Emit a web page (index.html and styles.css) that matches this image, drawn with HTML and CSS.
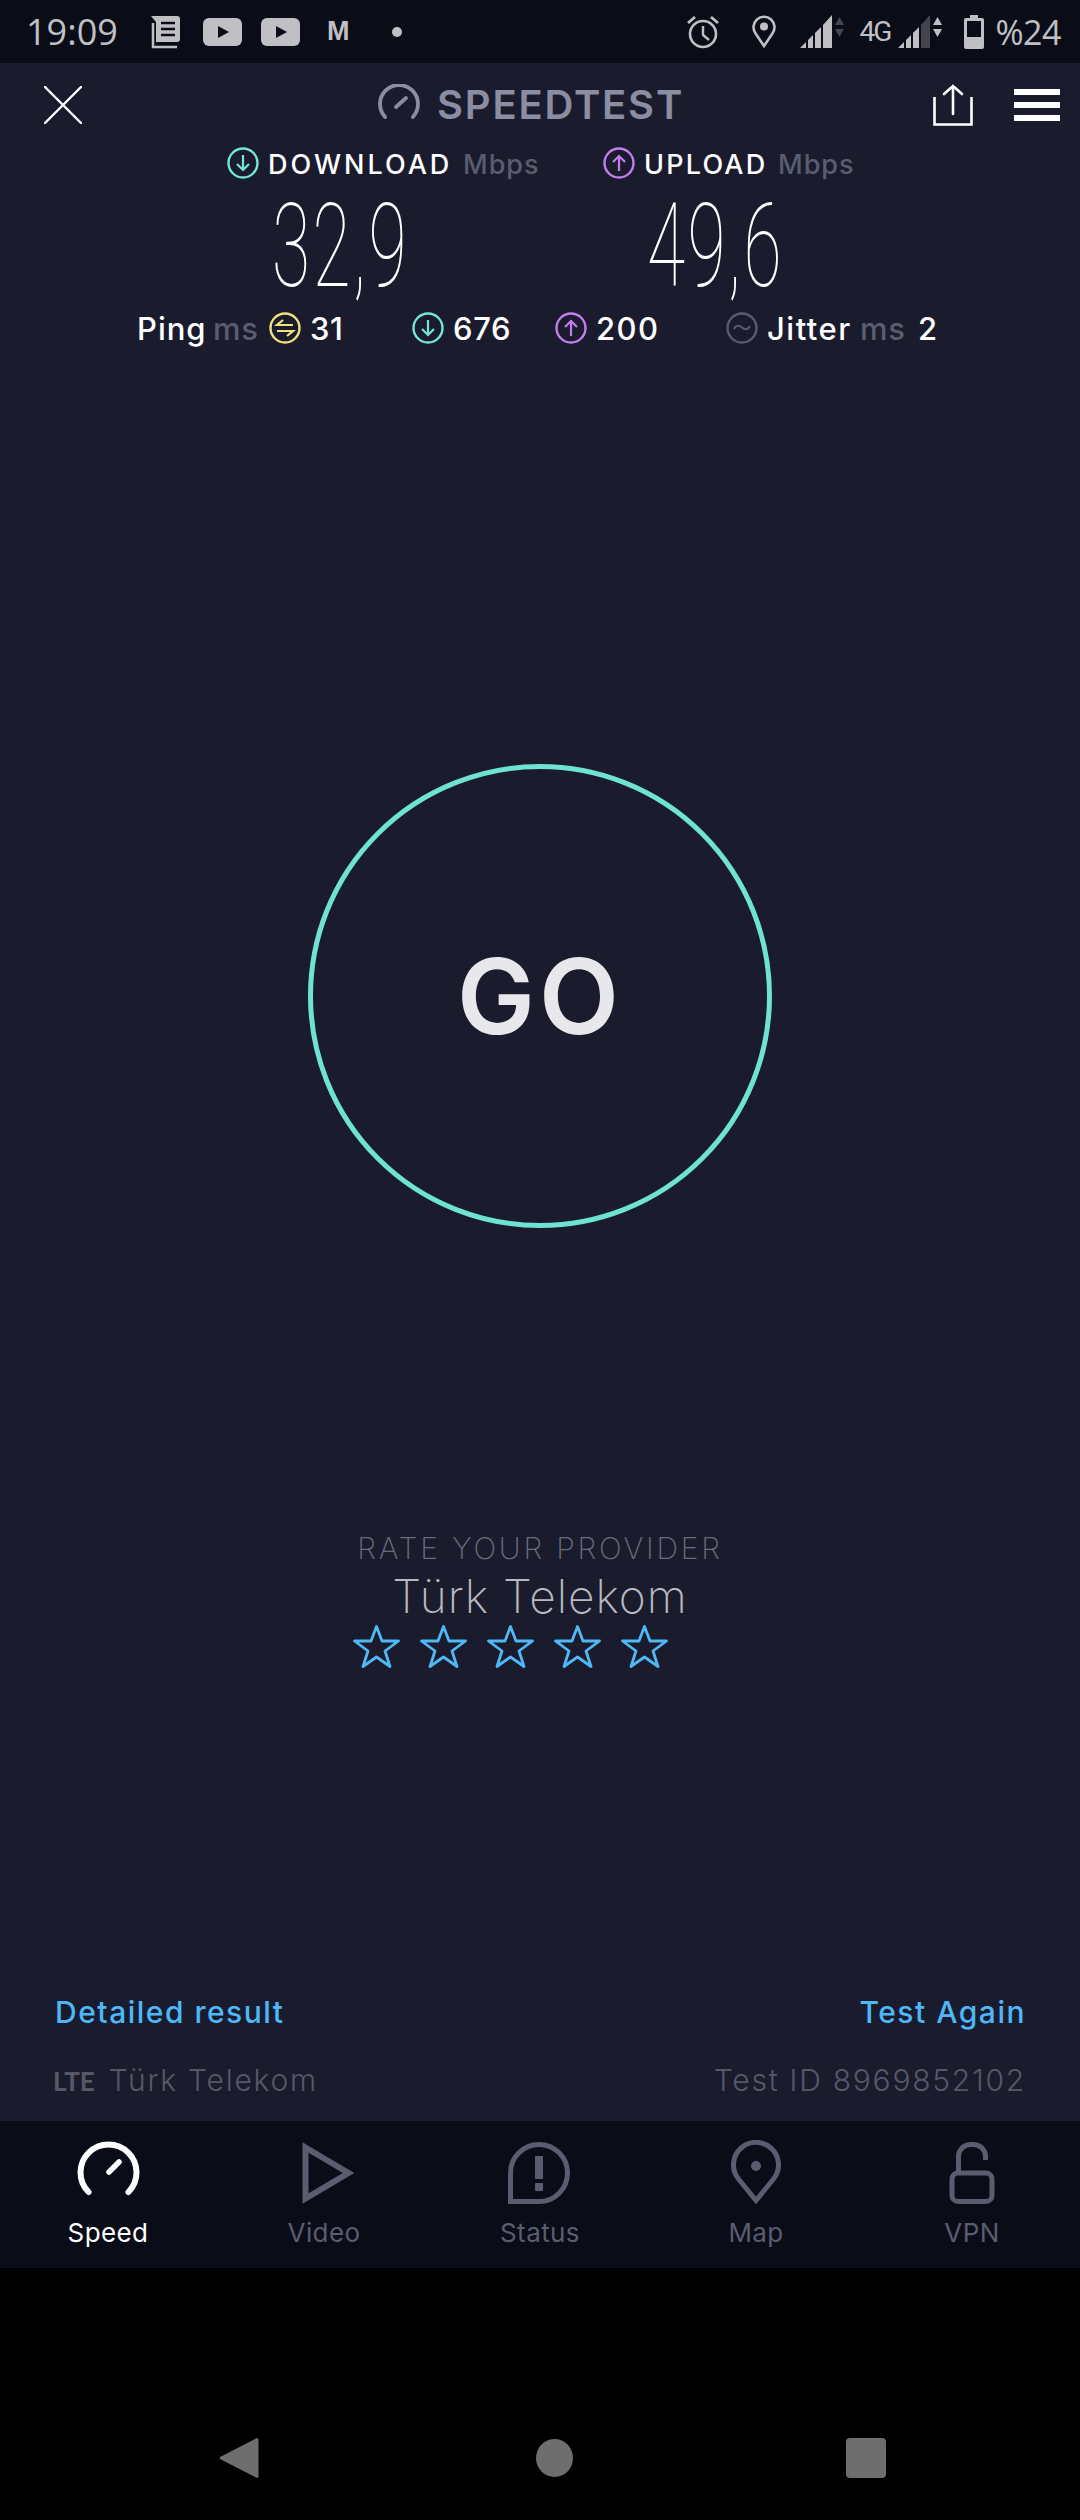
FILE: index.html
```html
<!DOCTYPE html>
<html lang="en">
<head>
<meta charset="utf-8">
<title>Speedtest</title>
<link rel="stylesheet" href="styles.css">
</head>
<body>
<div class="app">
  <div class="status">
    <span class="clock">19:09</span>
    <svg class="si news" width="34" height="34" viewBox="0 0 34 34"><path d="M5 8v24h24" fill="none" stroke="#c0c0c4" stroke-width="2.5"/><path d="M3 1h26a3 3 0 0 1 3 3v20a3 3 0 0 1-3 3H8V7z" fill="#c0c0c4"/><path d="M13 8h14M13 14h14M13 20h14" stroke="#0a0c18" stroke-width="2.6"/></svg>
    <svg class="si yt1" width="39" height="28" viewBox="0 0 39 28"><rect width="39" height="28" rx="6" fill="#c0c0c4"/><path d="M15 8l11 6-11 6z" fill="#0a0c18"/></svg>
    <svg class="si yt2" width="39" height="28" viewBox="0 0 39 28"><rect width="39" height="28" rx="6" fill="#c0c0c4"/><path d="M15 8l11 6-11 6z" fill="#0a0c18"/></svg>
    <span class="mail">M</span>
    <span class="dot"></span>
    <span class="spacer"></span>
    <svg class="si" width="32" height="34" viewBox="0 0 32 34"><circle cx="16" cy="19" r="13" fill="none" stroke="#c0c0c4" stroke-width="2.6"/><path d="M16 11v9l6 5" fill="none" stroke="#c0c0c4" stroke-width="2.4"/><path d="M1 8l7-6M31 8l-7-6" stroke="#c0c0c4" stroke-width="2.8"/></svg>
    <svg class="si pin" width="24" height="33" viewBox="0 0 24 33"><path d="M12 31L3.6 18.5A10.5 10.5 0 1 1 20.4 18.5z" fill="none" stroke="#c0c0c4" stroke-width="2.6"/><circle cx="12" cy="11.5" r="4" fill="#c0c0c4"/></svg>
    <svg class="si sig" width="45" height="33" viewBox="0 0 45 33"><path d="M0 33L6 27V33zM8 25L13 20V33H8zM15 18L21 12V33H15zM23 10L32 0V33H23z" fill="#c0c0c4"/><path d="M35 10l4.500-8 4.500 8zM35 14h9l-4.500 8z" fill="#44454f"/></svg>
    <span class="net">4G</span>
    <svg class="si sig2" width="45" height="33" viewBox="0 0 45 33"><path d="M0 33L6 27V33zM8 25L13 20V33H8zM15 18L21 12V33H15z" fill="#c0c0c4"/><path d="M23 10L32 0V33H23z" fill="#44454f"/><path d="M35 10l4.500-8 4.500 8zM35 14h9l-4.500 8z" fill="#c0c0c4"/></svg>
    <svg class="si bat" width="20" height="34" viewBox="0 0 20 34"><path d="M6 0h8v3h4a2 2 0 0 1 2 2v27a2 2 0 0 1-2 2H2a2 2 0 0 1-2-2V5a2 2 0 0 1 2-2h4z" fill="#c0c0c4"/><rect x="3" y="6" width="14" height="16" fill="#0a0c18"/></svg>
    <span class="pct">%24</span>
  </div>

  <main class="screen">
    <div class="toolbar">
      <svg class="close" width="38" height="38" viewBox="0 0 38 38"><path d="M1 1l36 36M37 1L1 37" stroke="#fff" stroke-width="2.4" stroke-linecap="round"/></svg>
      <div class="brand">
        <svg class="gauge" width="42" height="36" viewBox="0 0 42 36"><path d="M7.100 33A19 19 0 1 1 34.900 33" fill="none" stroke="#8b8da3" stroke-width="3.8" stroke-linecap="round"/><path d="M18 23l10-9" stroke="#8b8da3" stroke-width="3.800" stroke-linecap="round"/></svg>
        <span>SPEEDTEST</span>
      </div>
      <svg class="share" width="40" height="42" viewBox="0 0 40 42"><path d="M1.500 13V40.500H38.500V13" fill="none" stroke="#fff" stroke-width="2.600"/><path d="M20 30V2M11 10l9-8 9 8" fill="none" stroke="#fff" stroke-width="2.600" stroke-linecap="round"/></svg>
      <div class="burger"><i></i><i></i><i></i></div>
    </div>

    <div class="legend">
      <div class="leg leg-down">
        <svg class="ring" viewBox="0 0 32 32"><circle cx="16" cy="16" r="14.500" fill="none" stroke="#73e6d9" stroke-width="2.400"/><path d="M16 8v15M10 17l6 6 6-6" fill="none" stroke="#73e6d9" stroke-width="2.200"/></svg>
        <span class="w lab-down">DOWNLOAD</span><span class="g">Mbps</span>
      </div>
      <div class="leg leg-up">
        <svg class="ring" viewBox="0 0 32 32"><circle cx="16" cy="16" r="14.500" fill="none" stroke="#c57cf0" stroke-width="2.400"/><path d="M16 24V9M10 15l6-6 6 6" fill="none" stroke="#c57cf0" stroke-width="2.200"/></svg>
        <span class="w lab-up">UPLOAD</span><span class="g">Mbps</span>
      </div>
    </div>

    <div class="numbers">
      <span class="num num-down">32,9</span>
      <span class="num num-up">49,6</span>
    </div>

    <div class="metrics">
      <span class="w ping">Ping</span><span class="g ms">ms</span>
      <svg class="ring m-ping" viewBox="0 0 32 32"><circle cx="16" cy="16" r="14.500" fill="none" stroke="#f4e07e" stroke-width="2.400"/><path d="M24 13H8l6-5M8 19h16l-6 5" fill="none" stroke="#f4e07e" stroke-width="2.200"/></svg>
      <span class="w v31">31</span>
      <svg class="ring m-down" viewBox="0 0 32 32"><circle cx="16" cy="16" r="14.500" fill="none" stroke="#73e6d9" stroke-width="2.400"/><path d="M16 8v15M10 17l6 6 6-6" fill="none" stroke="#73e6d9" stroke-width="2.200"/></svg>
      <span class="w v676">676</span>
      <svg class="ring m-up" viewBox="0 0 32 32"><circle cx="16" cy="16" r="14.500" fill="none" stroke="#c57cf0" stroke-width="2.400"/><path d="M16 24V9M10 15l6-6 6 6" fill="none" stroke="#c57cf0" stroke-width="2.200"/></svg>
      <span class="w v200">200</span>
      <svg class="ring m-jit" viewBox="0 0 32 32"><circle cx="16" cy="16" r="14.500" fill="none" stroke="#5a5c6e" stroke-width="2.400"/><path d="M8 17c2-4 5-4 8-1.500s6 2.500 8-1.500" fill="none" stroke="#5a5c6e" stroke-width="2"/></svg>
      <span class="w jit">Jitter</span><span class="g ms2">ms</span><span class="w v2">2</span>
    </div>

    <div class="go"><span>GO</span></div>

    <div class="rate">
      <div class="rate-title">RATE YOUR PROVIDER</div>
      <div class="rate-name">Türk Telekom</div>
      <div class="stars">
        <svg width="47" height="43" viewBox="0 0 47 43"><path d="M23.500 1.500L29 16H45.500L32 26l5 15.500L23.500 32 10 41.500 15 26 1.500 16H18z" fill="none" stroke="#4fb8f5" stroke-width="2.800" stroke-linejoin="round"/></svg>
        <svg width="47" height="43" viewBox="0 0 47 43"><path d="M23.500 1.500L29 16H45.500L32 26l5 15.500L23.500 32 10 41.500 15 26 1.500 16H18z" fill="none" stroke="#4fb8f5" stroke-width="2.800" stroke-linejoin="round"/></svg>
        <svg width="47" height="43" viewBox="0 0 47 43"><path d="M23.500 1.500L29 16H45.500L32 26l5 15.500L23.500 32 10 41.500 15 26 1.500 16H18z" fill="none" stroke="#4fb8f5" stroke-width="2.800" stroke-linejoin="round"/></svg>
        <svg width="47" height="43" viewBox="0 0 47 43"><path d="M23.500 1.500L29 16H45.500L32 26l5 15.500L23.500 32 10 41.500 15 26 1.500 16H18z" fill="none" stroke="#4fb8f5" stroke-width="2.800" stroke-linejoin="round"/></svg>
        <svg width="47" height="43" viewBox="0 0 47 43"><path d="M23.500 1.500L29 16H45.500L32 26l5 15.500L23.500 32 10 41.500 15 26 1.500 16H18z" fill="none" stroke="#4fb8f5" stroke-width="2.800" stroke-linejoin="round"/></svg>
      </div>
    </div>

    <div class="foot">
      <div class="foot-row links"><span>Detailed result</span><span>Test Again</span></div>
      <div class="foot-row info"><span class="prov"><b>LTE</b>Türk Telekom</span><span>Test ID 8969852102</span></div>
    </div>
  </main>

  <nav class="tabs">
    <div class="tab on">
      <svg width="63" height="64" viewBox="0 0 63 64"><path d="M11.500 52A28 28 0 1 1 51.500 52" fill="none" stroke="#fff" stroke-width="6" stroke-linecap="round"/><path d="M32 32l10-10" stroke="#fff" stroke-width="5.500" stroke-linecap="round"/></svg>
      <span>Speed</span>
    </div>
    <div class="tab">
      <svg class="play" width="54" height="64" viewBox="0 -2 54 64"><path d="M3.500 5.500V56.500L46.500 31z" fill="none" stroke="#5a5c70" stroke-width="6"/></svg>
      <span>Video</span>
    </div>
    <div class="tab">
      <svg width="64" height="64" viewBox="0 -2 64 64"><path d="M2.500 59.500V31A28.500 28.500 0 1 1 31 59.500z" fill="none" stroke="#5a5c70" stroke-width="5"/><rect x="27" y="14" width="8" height="23" rx="1" fill="#5a5c70"/><rect x="27" y="41" width="8" height="8" rx="1" fill="#5a5c70"/></svg>
      <span>Status</span>
    </div>
    <div class="tab">
      <svg width="50" height="64" viewBox="0 -2 50 64"><path d="M25 58.500L7.500 37A22.500 22.500 0 1 1 42.500 37z" fill="none" stroke="#5a5c70" stroke-width="5"/><circle cx="25" cy="24" r="5" fill="#5a5c70"/></svg>
      <span>Map</span>
    </div>
    <div class="tab">
      <svg width="46" height="64" viewBox="0 -2 46 64"><rect x="3" y="31" width="40" height="28.500" rx="6" fill="none" stroke="#5a5c70" stroke-width="5"/><path d="M9.500 31V14.500A12 12 0 0 1 21.500 2.500h3A12 12 0 0 1 36.500 14.500V18" fill="none" stroke="#5a5c70" stroke-width="5"/></svg>
      <span>VPN</span>
    </div>
  </nav>

  <div class="sysnav">
    <svg width="39" height="42" viewBox="0 0 39 42"><path d="M36 1.500a1.500 1.500 0 0 1 2.500 1.200V39.300a1.500 1.500 0 0 1-2.500 1.200L1 22.500a1.500 1.500 0 0 1 0-3z" fill="#6e6e6e"/></svg>
    <span class="home"></span>
    <span class="square"></span>
  </div>
</div>
</body>
</html>
```
FILE: styles.css
```css
* { box-sizing: border-box; }
html, body { margin: 0; padding: 0; background: #000; }
.app { width: 1080px; height: 2520px; display: flex; flex-direction: column; font-family: "Inter", "Liberation Sans", sans-serif; overflow: hidden; }

.status { height: 63px; background: #0a0c18; display: flex; align-items: center; padding: 0 19px 0 26px; color: #c0c0c4; flex: none; }
.clock { font: 400 36px/1 "Open Sans", sans-serif; width: 91px; white-space: nowrap; }
.si { flex: none; display: block; }
.news { margin-left: 31px; }
.yt1 { margin-left: 21px; }
.yt2 { margin-left: 19px; }
.mail { font: 700 27px/1 "Liberation Sans", sans-serif; margin-left: 27px; width: 25px; }
.dot { width: 10px; height: 10px; border-radius: 50%; background: #c0c0c4; margin-left: 40px; }
.spacer { flex: 1; }
.pin { margin-left: 33px; }
.sig { margin-left: 24px; }
.net { font: 400 28px/1 "Roboto", sans-serif; margin-left: 15px; letter-spacing: -2px; width: 32px; }
.sig2 { margin-left: 6px; }
.bat { margin-left: 21px; }
.pct { font: 400 34px/1 "Open Sans", sans-serif; margin-left: 12px; letter-spacing: -.5px; }

.screen { height: 2058px; background: #1a1c2e; display: flex; flex-direction: column; flex: none; }
.toolbar { height: 84px; display: flex; align-items: center; padding: 0 19px 1px 44px; flex: none; }
.brand { display: flex; align-items: center; gap: 17px; margin-left: 296px; width: 308px; color: #8b8da3; font-size: 40px; font-weight: 600; letter-spacing: 1.8px; white-space: nowrap; }
.gauge { margin-top: -6px; flex: none; }
.share { margin-left: 247px; }
.burger { margin-left: 41px; width: 46px; display: flex; flex-direction: column; gap: 7px; }
.burger i { display: block; height: 6px; background: #fff; }

.w { color: #fff; }
.g { color: #5a5c70; }
.ring { width: 32px; height: 32px; flex: none; }
.legend { height: 32px; display: flex; align-items: center; font-size: 27px; font-weight: 500; flex: none; }
.leg { display: flex; align-items: center; gap: 9px; }
.leg span { padding-top: 2px; white-space: nowrap; }
.leg .g { letter-spacing: 1px; }
.lab-down { width: 186px; letter-spacing: 3px; }
.lab-up { width: 125px; letter-spacing: 2.200px; }
.leg-down { margin-left: 227px; width: 376px; }

.numbers { height: 133px; display: flex; align-items: center; flex: none; }
.num { font: 100 116px/1 "Roboto", sans-serif; letter-spacing: 4px; color: #fff; transform: scaleX(.6); transform-origin: 0 50%; display: block; white-space: nowrap; }
.num-down { margin-left: 272px; width: 375px; }

.metrics { height: 32px; display: flex; align-items: center; font-size: 31px; font-weight: 500; letter-spacing: .6px; padding-left: 137px; flex: none; white-space: nowrap; }
.ping { width: 69px; letter-spacing: 1px; }
.ms { margin-left: 7px; width: 44px; }
.m-ping { margin-left: 12px; }
.v31 { margin-left: 9px; width: 31px; }
.m-down { margin-left: 71px; }
.v676 { margin-left: 9px; width: 58px; }
.m-up { margin-left: 44px; }
.v200 { margin-left: 9px; width: 64px; letter-spacing: 1.500px; }
.m-jit { margin-left: 66px; }
.jit { margin-left: 9px; width: 83px; letter-spacing: 1.500px; }
.ms2 { margin-left: 10px; width: 43px; }
.v2 { margin-left: 15px; }

.go { width: 464px; height: 464px; border-radius: 50%; border: 5px solid #6fe3d3; margin: 420px auto 0; display: flex; align-items: center; justify-content: center; color: #e8e8ec; font-size: 104px; font-weight: 600; letter-spacing: 4px; flex: none; }

.rate { margin-top: 302px; display: flex; flex-direction: column; align-items: center; flex: none; }
.rate-title { font-size: 30px; font-weight: 200; color: #6a6c7c; line-height: 36px; letter-spacing: 2.800px; }
.rate-name { font-size: 46px; font-weight: 200; color: #b8b8c0; line-height: 56px; margin-top: 2px; letter-spacing: 1px; }
.stars { display: flex; gap: 20px; margin-top: 1px; margin-right: 60px; }

.foot { margin-top: auto; padding: 0 54px 23px 53px; font-size: 30px; flex: none; }
.foot-row { display: flex; justify-content: space-between; }
.links { color: #4db7f8; font-weight: 500; line-height: 36px; letter-spacing: 1.500px; padding-left: 2px; }
.info { color: #565868; font-weight: 300; line-height: 36px; margin-top: 32px; letter-spacing: 1.750px; }
.prov b { font: 700 26px/1 "Lato", sans-serif; letter-spacing: 0; margin-right: 14px; }

.tabs { height: 147px; background: #0a0c18; display: grid; grid-template-columns: repeat(5, 216px); flex: none; }
.tab { display: flex; flex-direction: column; align-items: center; padding-top: 19px; color: #5a5c70; font-size: 26px; font-weight: 400; letter-spacing: .4px; gap: 14px; }
.tab span { line-height: 30px; }
.tab.on { color: #fff; }
.play { margin-left: 10px; }

.sysnav { height: 252px; background: #000; display: flex; align-items: flex-start; padding: 169px 0 0 220px; flex: none; }
.home { width: 37px; height: 38px; border-radius: 50%; background: #6e6e6e; margin: 2px 0 0 277px; }
.square { width: 40px; height: 40px; border-radius: 4px; background: #6e6e6e; margin: 1px 0 0 273px; }
```
